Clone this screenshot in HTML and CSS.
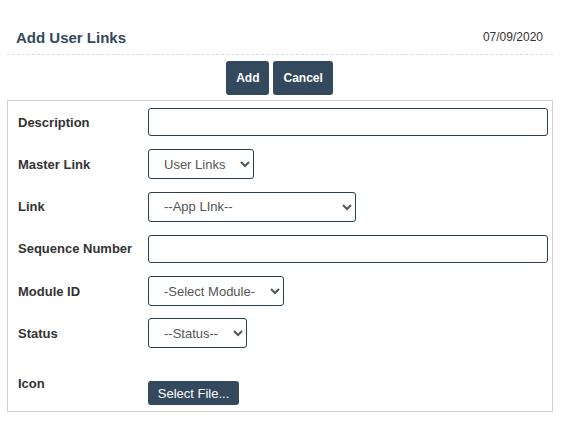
FILE: index.html
```html
<!DOCTYPE html>
<html>
<head>
<meta charset="utf-8">
<link rel="stylesheet" href="styles.css">
</head>
<body>
<div class="page">
  <div class="header">
    <h1 class="title">Add User Links</h1>
    <span class="date">07/09/2020</span>
  </div>
  <div class="actions">
    <button class="btn">Add</button>
    <button class="btn">Cancel</button>
  </div>
  <div class="form">
    <label class="label">Description</label>
    <input class="field field-wide" type="text">
    <label class="label">Master Link</label>
    <div><select class="field sel sel-master"><option>User Links</option></select></div>
    <label class="label">Link</label>
    <div><select class="field sel sel-link"><option>--App LInk--</option></select></div>
    <label class="label">Sequence Number</label>
    <input class="field field-wide" type="text">
    <label class="label">Module ID</label>
    <div><select class="field sel sel-module"><option>-Select Module-</option></select></div>
    <label class="label">Status</label>
    <div><select class="field sel sel-status"><option>--Status--</option></select></div>
    <label class="label label-top">Icon</label>
    <div class="file-cell"><button class="btn btn-file">Select File...</button></div>
  </div>
</div>
</body>
</html>
```
FILE: styles.css
```css
* { box-sizing: border-box; }
body {
  margin: 0;
  background: #fff;
  font-family: "Liberation Sans", Arial, sans-serif;
  color: #333;
}
.page {
  width: 546px;
  margin: 0 0 0 7px;
  padding-top: 22px;
}
.header {
  display: flex;
  justify-content: space-between;
  align-items: center;
  height: 33px;
  padding: 0 10px 2px 9px;
  border-bottom: 1px dashed #dcdcdc;
}
.title {
  margin: 0;
  font-size: 15px;
  font-weight: bold;
  color: #34495e;
}
.date {
  font-size: 12px;
  color: #333;
}
.actions {
  display: flex;
  justify-content: center;
  gap: 4px;
  margin-top: 6px;
  margin-left: -1px;
}
.btn {
  height: 34px;
  padding: 0 10px;
  border: none;
  border-radius: 3px;
  background: #34495e;
  color: #fff;
  font-family: "Liberation Sans", Arial, sans-serif;
  font-size: 12px;
  font-weight: bold;
}
.form {
  margin-top: 5px;
  border: 1px solid #cfcfcf;
  padding: 6px 4px 6px 10px;
  display: grid;
  grid-template-columns: 130px 1fr;
  grid-template-rows: repeat(6, 30px) 44px;
  row-gap: 12.25px;
  align-items: center;
}
.label {
  font-size: 13px;
  font-weight: bold;
  color: #333;
}
.label-top {
  align-self: start;
  margin-top: 15px;
  line-height: 16px;
}
.field {
  border: 1px solid #2c3e50;
  border-radius: 3px;
  background: #fff;
  font-family: "Liberation Sans", Arial, sans-serif;
  font-size: 13px;
  color: #555;
}
.field-wide {
  width: 400px;
  height: 28px;
  padding: 0 8px;
  display: block;
}
.sel {
  display: block;
  height: 30px;
  padding: 0 8px 0 11px;
}
.sel-master { width: 106px; }
.sel-link { width: 208px; }
.sel-module { width: 136px; }
.sel-status { width: 99px; }
.file-cell {
  align-self: start;
  padding-top: 20.5px;
}
.btn-file {
  height: 24px;
  width: 91px;
  padding: 0;
  font-size: 13px;
  font-weight: normal;
  display: block;
}
```
